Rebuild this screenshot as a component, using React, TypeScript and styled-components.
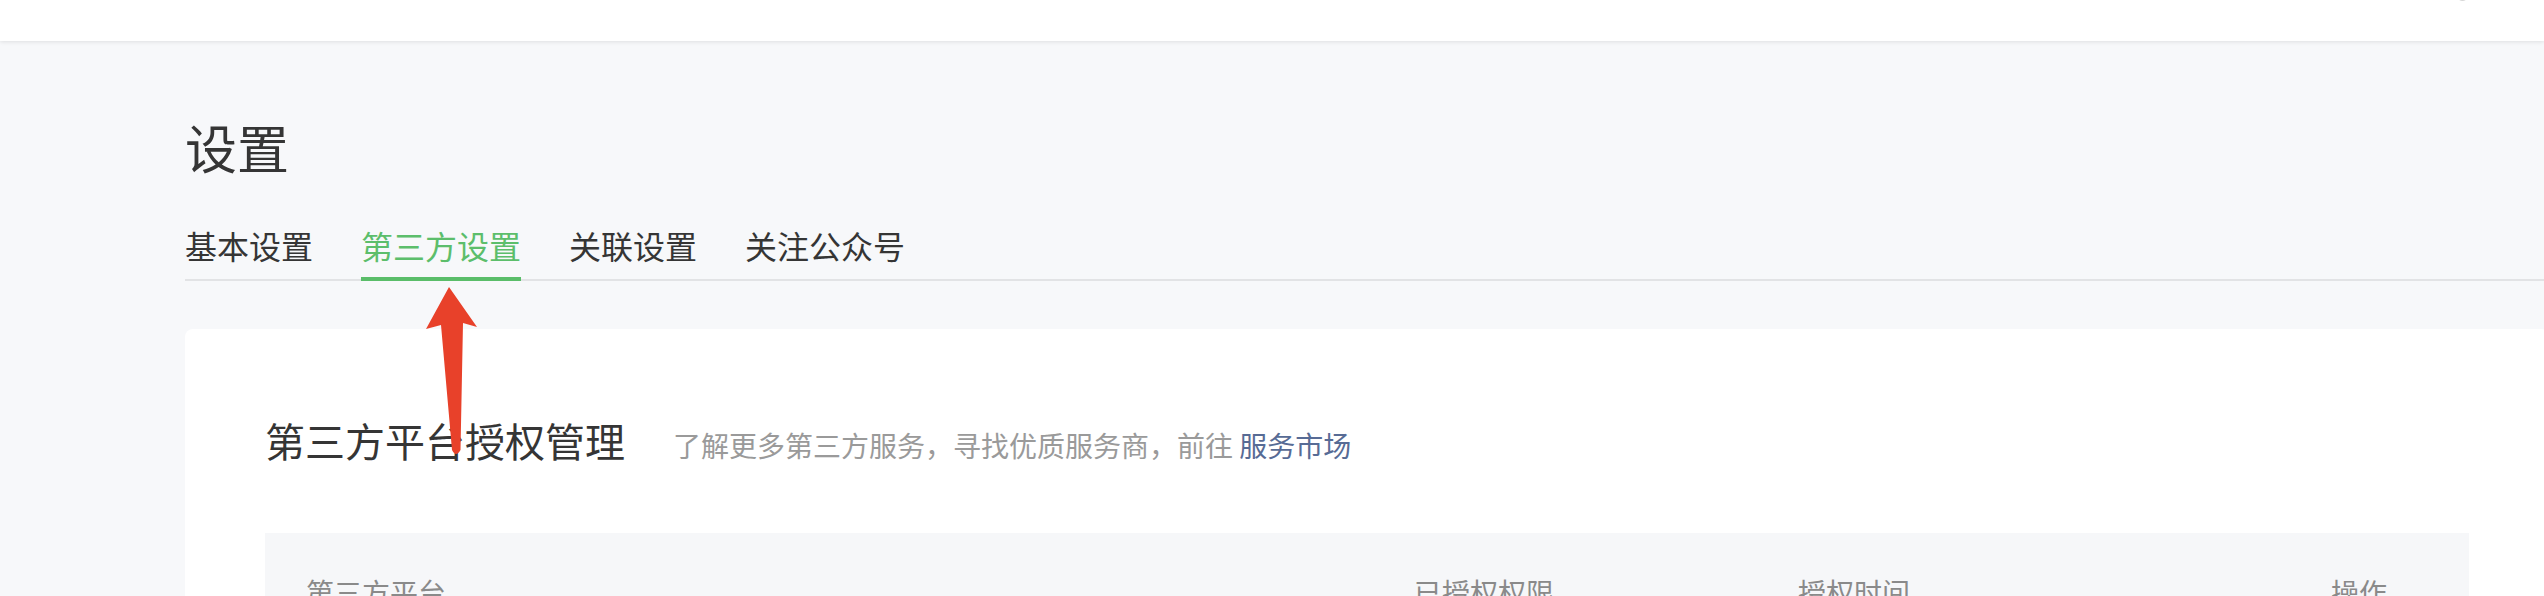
import React from "react";
import styled, { createGlobalStyle } from "styled-components";

const GlobalStyle = createGlobalStyle`
  html, body {
    margin: 0;
    padding: 0;
    background: #f7f8fa;
    overflow: hidden;
  }
  body {
    font-family: "Noto Sans CJK SC", "Noto Sans", sans-serif;
    color: #333;
  }
`;

const tabs = ["基本设置", "第三方设置", "关联设置", "关注公众号"];
const columns = ["第三方平台", "已授权权限", "授权时间", "操作"];

const App: React.FC = () => {
  return (
    <Page>
      <GlobalStyle />
      <TopBar>
        <AvatarEdge />
      </TopBar>
      <Main>
        <Title>设置</Title>
        <TabBar>
          {tabs.map((tab, i) => (
            <Tab key={tab} active={i === 1}>
              {tab}
            </Tab>
          ))}
        </TabBar>
        <Card>
          <CardHead>
            <CardTitle>第三方平台授权管理</CardTitle>
            <CardDesc>
              了解更多第三方服务，寻找优质服务商，前往 <Link>服务市场</Link>
            </CardDesc>
          </CardHead>
          <TableHead>
            {columns.map((col, i) => (
              <HeadCell key={col} right={i === columns.length - 1}>
                {col}
              </HeadCell>
            ))}
          </TableHead>
        </Card>
      </Main>
      <Arrow viewBox="0 0 64 176" width="64" height="176">
        <path
          d="M29 3 L57 43 L43 39 L40.5 166 Q36 174 32 166 L21 41 L6 45 Z"
          fill="#e8412a"
        />
      </Arrow>
    </Page>
  );
};

const Page = styled.div`
  position: relative;
  width: 2544px;
  height: 596px;
  overflow: hidden;
`;

const TopBar = styled.div`
  height: 41px;
  background: #fff;
  box-shadow: 0 1px 4px rgba(0, 0, 0, 0.1);
  display: flex;
  justify-content: flex-end;
  padding-right: 76px;
  position: relative;
  z-index: 1;
`;

const AvatarEdge = styled.div`
  width: 11px;
  height: 11px;
  margin-top: -10px;
  border-radius: 50%;
  background: #d6d6d6;
`;

const Main = styled.div`
  padding-left: 185px;
  width: 2364px;
`;

const Title = styled.h1`
  margin: 80px 0 0;
  font-size: 52px;
  line-height: 52px;
  font-weight: 400;
  color: #353535;
`;

const TabBar = styled.div`
  display: flex;
  gap: 48px;
  margin-top: 56px;
  border-bottom: 2px solid #e2e3e5;
`;

const Tab = styled.div<{ active?: boolean }>`
  font-size: 32px;
  line-height: 32px;
  padding-bottom: 16px;
  margin-bottom: -2px;
  color: ${(p) => (p.active ? "#5cbe6b" : "#353535")};
  border-bottom: 4px solid ${(p) => (p.active ? "#5abd69" : "transparent")};
`;

const Card = styled.div`
  margin-top: 48px;
  background: #fff;
  border-radius: 8px;
  padding: 91px 80px 0;
  height: 400px;
`;

const CardHead = styled.div`
  display: flex;
  align-items: baseline;
  gap: 48px;
`;

const CardTitle = styled.h2`
  margin: 0;
  font-size: 40px;
  line-height: 40px;
  font-weight: 400;
  color: #353535;
`;

const CardDesc = styled.span`
  font-size: 28px;
  line-height: 28px;
  color: #9a9a9a;
`;

const Link = styled.a`
  color: #576b95;
  text-decoration: none;
`;

const TableHead = styled.div`
  margin-top: 73px;
  background: #f6f7f9;
  display: grid;
  grid-template-columns: 1108px 384px 1fr 120px;
  padding: 45px 82px 40px 41px;
`;

const HeadCell = styled.div<{ right?: boolean }>`
  font-size: 28px;
  line-height: 28px;
  color: #8a8a8a;
  text-align: ${(p) => (p.right ? "right" : "left")};
`;

const Arrow = styled.svg`
  position: absolute;
  left: 420px;
  top: 284px;
  z-index: 2;
`;

export default App;
